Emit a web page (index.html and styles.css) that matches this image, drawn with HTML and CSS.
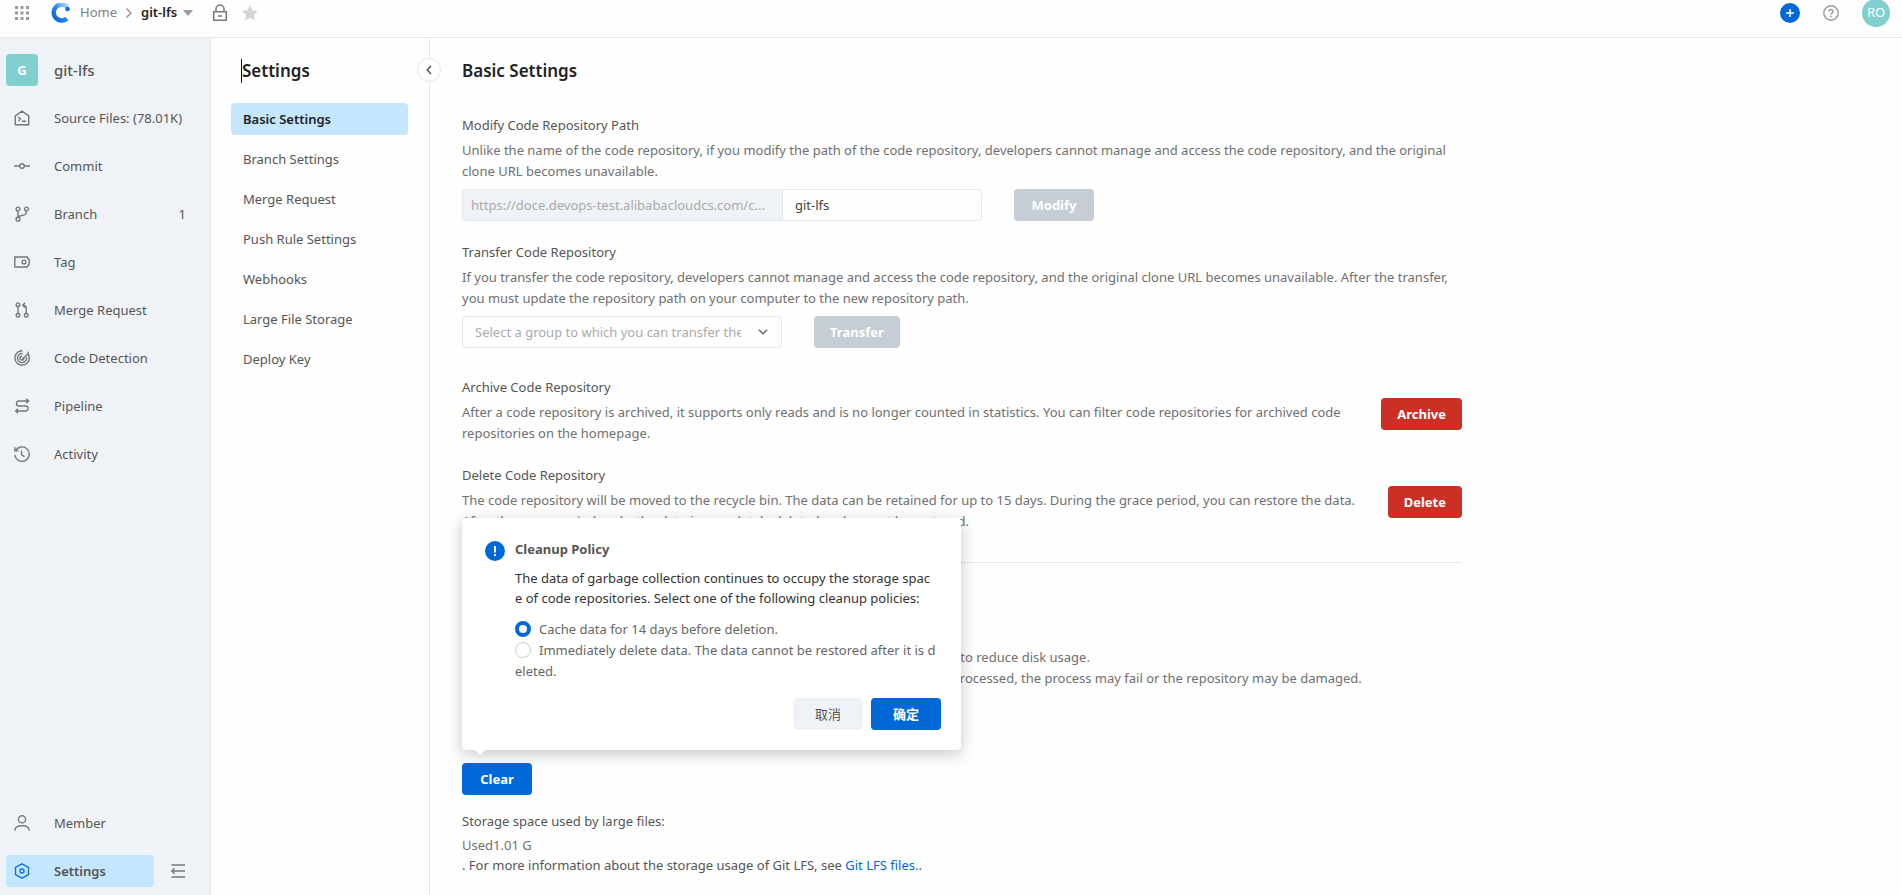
FILE: index.html
```html
<!DOCTYPE html>
<html lang="en">
<head>
<meta charset="utf-8">
<title>git-lfs - Basic Settings</title>
<link rel="stylesheet" href="styles.css">
</head>
<body>
<header class="topbar">
  <button class="icon-button apps" aria-label="Apps">
    <svg width="16" height="16" viewBox="0 0 16 16" fill="#999"><path d="M1 1h3v3H1zM6.500 1h3v3h-3zM12 1h3v3h-3zM1 6.500h3v3H1zM6.500 6.500h3v3h-3zM12 6.500h3v3h-3zM1 12h3v3H1zM6.500 12h3v3h-3zM12 12h3v3h-3z"/></svg>
  </button>
  <a class="logo" href="#" aria-label="Codeup">
    <svg width="20" height="20" viewBox="0 0 20 20"><defs><linearGradient id="lg" x1="0" y1="1" x2="1" y2="0"><stop offset="0" stop-color="#0a62d0"/><stop offset=".5" stop-color="#2a8be8"/><stop offset="1" stop-color="#b5dcff"/></linearGradient></defs><path d="M16 15.500A8 8 0 1 1 16.500 4" fill="none" stroke="url(#lg)" stroke-width="4.500"/><circle cx="16.500" cy="6" r="2.300" fill="#0b6ddb"/></svg>
  </a>
  <nav class="crumbs" aria-label="Breadcrumb">
    <a class="crumb" href="#">Home</a>
    <svg width="8" height="12" viewBox="0 0 8 12" fill="none" stroke="#999" stroke-width="1.500"><path d="M1.500 1.500 6 6l-4.500 4.500"/></svg>
    <button class="crumb-current">git-lfs <svg width="10" height="6" viewBox="0 0 10 6"><path d="M0 0h10L5 6z" fill="#999"/></svg></button>
  </nav>
  <svg class="lock" width="16" height="18" viewBox="0 0 16 18" fill="none" stroke="#777" stroke-width="1.500"><path d="M1.700 7.700h12.600v8.600H1.700zM4 7.500V5a4 4 0 0 1 8 0v2.500M6 12h4"/></svg>
  <button class="icon-button" aria-label="Star">
    <svg width="18" height="18" viewBox="0 0 18 18"><path d="m9 1 2.400 5.200 5.600.7-4.100 3.900 1 5.600L9 13.700l-4.900 2.700 1-5.600L1 6.900l5.600-.7z" fill="#d3d5d8"/></svg>
  </button>
  <div class="topbar-right">
    <button class="icon-button" aria-label="Create">
      <svg width="20" height="20" viewBox="0 0 20 20"><circle cx="10" cy="10" r="10" fill="#0169d7"/><path d="M10 6v8M6 10h8" stroke="#fff" stroke-width="1.500"/></svg>
    </button>
    <button class="icon-button" aria-label="Help">
      <svg width="16" height="16" viewBox="0 0 16 16" fill="none" stroke="#999" stroke-width="1.400"><circle cx="8" cy="8" r="7.200"/><path d="M6 6.500a2 2 0 1 1 2.800 1.800c-.6.300-.8.600-.8 1.400M8 10.800v1.400"/></svg>
    </button>
    <button class="user">RO</button>
  </div>
</header>

<div class="layout">
  <aside class="sidebar">
    <a class="side-item project" href="#"><span class="project-badge">G</span><span class="project-name">git-lfs</span></a>
    <nav class="side-nav" aria-label="Repository">
      <a class="side-item" href="#"><svg class="ico" viewBox="0 0 16 16"><path d="M1.300 5.800 8 1.200l6.700 4.600v8.900H1.300zM4.300 7l2.200 2-2.200 2M8 11.300h4"/></svg>Source Files: (78.01K)</a>
      <a class="side-item" href="#"><svg class="ico" viewBox="0 0 16 16"><circle cx="8" cy="8" r="2.300"/><path d="M0 8h5.700M10.300 8H16"/></svg>Commit</a>
      <a class="side-item" href="#"><svg class="ico" viewBox="0 0 16 16"><circle cx="4" cy="3" r="1.900"/><circle cx="12.500" cy="3" r="1.900"/><circle cx="4" cy="13.200" r="1.900"/><path d="M4 5v6.300M12.500 5c0 3.500-1.500 4-4 4.400C6 9.800 4.300 10 4 11.300"/></svg>Branch<span class="count">1</span></a>
      <a class="side-item" href="#"><svg class="ico" viewBox="0 0 16 16"><path d="M.8 3h12.400l2 3v4l-2 3H.8z"/><circle cx="10" cy="8" r="1.900"/></svg>Tag</a>
      <a class="side-item" href="#"><svg class="ico" viewBox="0 0 16 16"><circle cx="4" cy="2.700" r="1.800"/><circle cx="4" cy="13.300" r="1.800"/><circle cx="12.200" cy="13.300" r="1.800"/><path d="M4 4.500v7M12.200 11.500V6c0-1.800-.8-2.700-3.400-2.700M11 .8 8.700 3.300 11 5.600"/></svg>Merge Request</a>
      <a class="side-item" href="#"><svg class="ico" viewBox="0 0 16 16"><path d="M8.500.8A7.200 7.200 0 1 0 15.200 7c0-1.200-.5-2.400-1.200-3.300L8.300 9M8.500 3.600A4.500 4.500 0 1 0 12.400 7M8 6.300A1.900 1.900 0 1 0 9.800 8M14 1.800v2.300"/></svg>Code Detection</a>
      <a class="side-item" href="#"><svg class="ico" viewBox="0 0 16 16"><path d="M14.500 3H5a2.500 2.500 0 0 0 0 5h6.500a2.500 2.500 0 0 1 0 5H1.800M12.300.7l2.300 2.300-2.300 2.200M4 10.800 1.700 13 4 15.300"/></svg>Pipeline</a>
      <a class="side-item" href="#"><svg class="ico" viewBox="0 0 16 16"><path d="M1.700 4.700A7.200 7.200 0 1 1 .9 9M.9 1.200v3.700h3.700M7.500 4.700v4.200l3 1.800"/></svg>Activity</a>
    </nav>
    <nav class="side-nav side-bottom" aria-label="Administration">
      <a class="side-item" href="#"><svg class="ico" viewBox="0 0 16 16"><circle cx="8" cy="4.300" r="3.600"/><path d="M.8 15.700c0-3.300 2.600-4.900 7.200-4.900s7.200 1.600 7.200 4.900"/></svg>Member</a>
      <div class="side-row">
        <a class="side-item active" href="#" aria-current="page"><svg class="ico" viewBox="0 0 16 16"><path d="m8 .9 6.500 3.400v7.400L8 15.100l-6.500-3.400V4.300z"/><circle cx="8" cy="8" r="2"/></svg>Settings</a>
        <button class="icon-button" aria-label="Collapse sidebar"><svg class="ico" viewBox="0 0 16 16"><path d="M1.500 2H15M3 8h12M1.500 14H15M4.500 5.300 1.700 8l2.800 2.700"/></svg></button>
      </div>
    </nav>
  </aside>

  <aside class="subnav">
    <h2 class="heading caret">Settings</h2>
    <nav class="sub-list" aria-label="Settings">
      <a class="sub-item selected" href="#" aria-current="page">Basic Settings</a>
      <a class="sub-item" href="#">Branch Settings</a>
      <a class="sub-item" href="#">Merge Request</a>
      <a class="sub-item" href="#">Push Rule Settings</a>
      <a class="sub-item" href="#">Webhooks</a>
      <a class="sub-item" href="#">Large File Storage</a>
      <a class="sub-item" href="#">Deploy Key</a>
    </nav>
    <button class="collapse" aria-label="Collapse settings menu"><svg width="6" height="10" viewBox="0 0 6 10" fill="none" stroke="#555" stroke-width="1.500"><path d="M5 1 1.200 5 5 9"/></svg></button>
  </aside>

  <main class="content">
    <h1 class="heading">Basic Settings</h1>

    <section class="block first">
      <h3 class="label" id="path-label">Modify Code Repository Path</h3>
      <p class="text">Unlike the name of the code repository, if you modify the path of the code repository, developers cannot manage and access the code repository, and the original<br>clone URL becomes unavailable.</p>
      <div class="controls">
        <div class="path">
          <span class="path-prefix">https://doce.devops-test.alibabacloudcs.com/c...</span>
          <input class="path-input" type="text" value="git-lfs" aria-labelledby="path-label">
        </div>
        <button class="btn disabled" disabled>Modify</button>
      </div>
    </section>

    <section class="block">
      <h3 class="label" id="transfer-label">Transfer Code Repository</h3>
      <p class="text">If you transfer the code repository, developers cannot manage and access the code repository, and the original clone URL becomes unavailable. After the transfer,<br>you must update the repository path on your computer to the new repository path.</p>
      <div class="controls">
        <div class="select-wrap">
          <select class="select" aria-labelledby="transfer-label"><option>Select a group to which you can transfer the repository</option></select>
          <svg class="select-arrow" width="10" height="6" viewBox="0 0 10 6" fill="none" stroke="#666" stroke-width="1.500"><path d="m.8.800 4.200 4 4.200-4"/></svg>
        </div>
        <button class="btn disabled" disabled>Transfer</button>
      </div>
    </section>

    <section class="block spaced">
      <h3 class="label">Archive Code Repository</h3>
      <div class="split">
        <p class="text">After a code repository is archived, it supports only reads and is no longer counted in statistics. You can filter code repositories for archived code<br>repositories on the homepage.</p>
        <button class="btn danger">Archive</button>
      </div>
    </section>

    <section class="block">
      <h3 class="label">Delete Code Repository</h3>
      <div class="split">
        <p class="text">The code repository will be moved to the recycle bin. The data can be retained for up to 15 days. During the grace period, you can restore the data.<br>After the grace period ends, the data is completely deleted and cannot be restored.</p>
        <button class="btn danger">Delete</button>
      </div>
    </section>

    <hr class="rule">

    <section class="storage">
      <p class="text">You can run garbage collection for the code repository to remove all residual files to reduce disk usage.<br>The code repository is blocked during the process. If a push or merge request is processed, the process may fail or the repository may be damaged.</p>
      <div class="clear-wrap">
        <button class="btn primary">Clear</button>
        <div class="popover" role="dialog" aria-labelledby="pop-title">
          <svg class="pop-icon" width="20" height="20" viewBox="0 0 20 20"><circle cx="10" cy="10" r="10" fill="#0169d7"/><path d="M9 5h2v6.500H9zM9 13h2v2H9z" fill="#fff"/></svg>
          <div class="pop-body">
            <h4 class="pop-title" id="pop-title">Cleanup Policy</h4>
            <p class="pop-text">The data of garbage collection continues to occupy the storage spac<br>e of code repositories. Select one of the following cleanup policies:</p>
            <div class="radios">
              <label class="radio-label"><input class="radio" type="radio" name="policy" checked>Cache data for 14 days before deletion.</label>
              <label class="radio-label"><input class="radio" type="radio" name="policy">Immediately delete data. The data cannot be restored after it is d<br>eleted.</label>
            </div>
            <div class="pop-actions">
              <button class="btn plain">取消</button>
              <button class="btn primary">确定</button>
            </div>
          </div>
        </div>
      </div>
      <h3 class="label">Storage space used by large files:</h3>
      <p class="usage">Used1.01 G<br><span class="usage-more">. For more information about the storage usage of Git LFS, see <a class="link" href="#">Git LFS files.</a>.</span></p>
    </section>
  </main>
</div>
</body>
</html>
```
FILE: styles.css
```css
* { box-sizing: border-box; }

body {
  margin: 0;
  min-height: 100vh;
  display: flex;
  flex-direction: column;
  background: #fefefe;
  color: #555;
  font: 13px/21px "Noto Sans", "Noto Sans CJK SC", sans-serif;
}

h1, h2, h3, h4, p { margin: 0; font-size: 13px; font-weight: 400; }
a { color: inherit; text-decoration: none; }
button { font: inherit; color: inherit; border: 0; padding: 0; background: none; cursor: pointer; }
svg { display: block; flex: none; }

/* Top bar */
.topbar {
  display: flex;
  align-items: center;
  height: 38px;
  padding: 0 12px 12px 14px;
  border-bottom: 1px solid #e6e7e9;
}
.icon-button { display: flex; flex: none; }
.logo { margin-left: 21px; }
.crumbs { display: flex; align-items: center; gap: 8px; margin: 0 19px 0 9px; }
.crumb { color: #808080; }
.crumb-current {
  display: flex;
  align-items: center;
  gap: 6px;
  color: #222;
  font-weight: 600;
}
.lock { margin-right: 13px; }
.topbar-right { display: flex; align-items: center; gap: 23px; margin-left: auto; }
.user {
  flex: none;
  width: 28px;
  height: 28px;
  border-radius: 50%;
  background: #81d0ce;
  color: #fff;
}

.layout { display: flex; flex: 1; }

/* Repository sidebar */
.sidebar {
  flex: none;
  display: flex;
  flex-direction: column;
  width: 211px;
  padding: 16px 24px 8px 6px;
  background: #eff3f7;
  border-right: 1px solid #e4e7ea;
}
.side-nav { display: flex; flex-direction: column; gap: 16px; margin-top: 16px; }
.side-bottom { margin-top: auto; }
.side-item {
  display: flex;
  align-items: center;
  height: 32px;
  padding-left: 8px;
  gap: 24px;
  border-radius: 4px;
}
.project { padding-left: 0; gap: 16px; }
.project-badge {
  width: 32px;
  height: 32px;
  border-radius: 4px;
  background: #81d0ce;
  color: #fff;
  font-weight: 700;
  line-height: 32px;
  text-align: center;
}
.project-name { font-size: 15px; font-weight: 500; }
.ico {
  width: 16px;
  height: 16px;
  fill: none;
  stroke: #777;
  stroke-width: 1.4;
}
.count { margin-left: auto; }
.side-row { display: flex; align-items: center; gap: 16px; }
.active {
  width: 148px;
  background: #c4e7ff;
  font-weight: 600;
}
.active .ico { stroke: #0c72dc; }

/* Settings menu */
.subnav {
  position: relative;
  flex: none;
  width: 219px;
  padding: 21px 21px 0 20px;
  border-right: 1px solid #e6e7e9;
}
.heading {
  color: #222;
  font-size: 17px;
  font-weight: 600;
  line-height: 24px;
}
.caret { margin-left: 10px; border-left: 1px solid #111; }
.sub-list { display: flex; flex-direction: column; gap: 8px; margin-top: 20px; }
.sub-item {
  height: 32px;
  padding-left: 12px;
  border-radius: 4px;
  line-height: 32px;
}
.selected { background: #c4e7ff; color: #222; font-weight: 600; }
.collapse {
  position: absolute;
  top: 20px;
  right: -12px;
  display: flex;
  align-items: center;
  justify-content: center;
  width: 24px;
  height: 24px;
  border: 1px solid #e6e7e9;
  border-radius: 50%;
  background: #fff;
}

/* Main column */
.content { flex: 1; min-width: 0; max-width: 1064px; padding: 21px 32px 16px; }
.block { margin-top: 21px; }
.first { margin-top: 32px; }
.spaced { margin-top: 29px; }
.text { padding-top: 4px; color: #707070; }
.controls { display: flex; gap: 32px; margin-top: 7px; }
.split { display: flex; align-items: flex-start; justify-content: space-between; }

.btn {
  flex: none;
  height: 32px;
  padding: 0 16px;
  border-radius: 4px;
  font-weight: 700;
}
.disabled { min-width: 80px; background: #c6cdd5; color: #fff; }
.danger { background: #cc2f24; color: #fff; }
.primary { min-width: 70px; background: #0169d7; color: #fff; }
.plain { min-width: 70px; background: #eff3f7; font-weight: 400; }

.path { display: flex; width: 520px; }
.path-prefix {
  width: 321px;
  height: 32px;
  padding: 0 8px;
  border: 1px solid #e6e9ec;
  border-radius: 4px 0 0 4px;
  background: #eff3f7;
  color: #aaa;
  line-height: 30px;
  white-space: nowrap;
  overflow: hidden;
}
.path-input {
  flex: 1;
  min-width: 0;
  padding: 0 12px;
  border: 1px solid #e6e9ec;
  border-left: 0;
  border-radius: 0 4px 4px 0;
  background: transparent;
  color: #444;
  font: inherit;
}
.select-wrap { position: relative; width: 320px; }
.select {
  appearance: none;
  width: 100%;
  height: 32px;
  padding: 0 40px 0 12px;
  border: 1px solid #e6e9ec;
  border-radius: 4px;
  background: transparent;
  color: #aaa;
  font: inherit;
}
.select-arrow { position: absolute; top: 13px; right: 14px; pointer-events: none; }

.rule { height: 1px; margin: 30px 0 0; border: 0; background: #e6e7e9; }
.storage { padding-top: 80px; }

/* Cleanup popover, anchored to the Clear button */
.clear-wrap { position: relative; width: max-content; margin: 74px 0 16px; }
.popover {
  position: absolute;
  left: 0;
  bottom: calc(100% + 13px);
  display: flex;
  gap: 10px;
  width: 499px;
  padding: 21px 20px 20px 23px;
  border-radius: 4px;
  background: #fff;
  box-shadow: 0 4px 16px rgba(0, 0, 0, .22);
}
.popover::after {
  content: "";
  position: absolute;
  left: 13px;
  top: 100%;
  border: 5px solid transparent;
  border-top-color: #fff;
  border-bottom: 0;
}
.pop-icon { margin-top: 2px; }
.pop-body { flex: 1; min-width: 0; white-space: nowrap; }
.pop-title { font-weight: 700; }
.pop-text { margin-top: 8px; color: #333; line-height: 20px; }
.radios { margin-top: 11px; color: #666; }
.radio-label { display: block; }
.radio {
  appearance: none;
  width: 16px;
  height: 16px;
  margin: 0 8px 0 0;
  border: 1px solid #c6cdd5;
  border-radius: 50%;
  background: #fff;
  vertical-align: -3px;
}
.radio:checked { border: 4px solid #0169d7; }
.pop-actions { display: flex; justify-content: flex-end; gap: 8px; margin-top: 16px; }

.usage { margin-top: 3px; color: #707070; line-height: 20px; }
.usage-more { color: #555; }
.link { color: #0169d7; }
```
